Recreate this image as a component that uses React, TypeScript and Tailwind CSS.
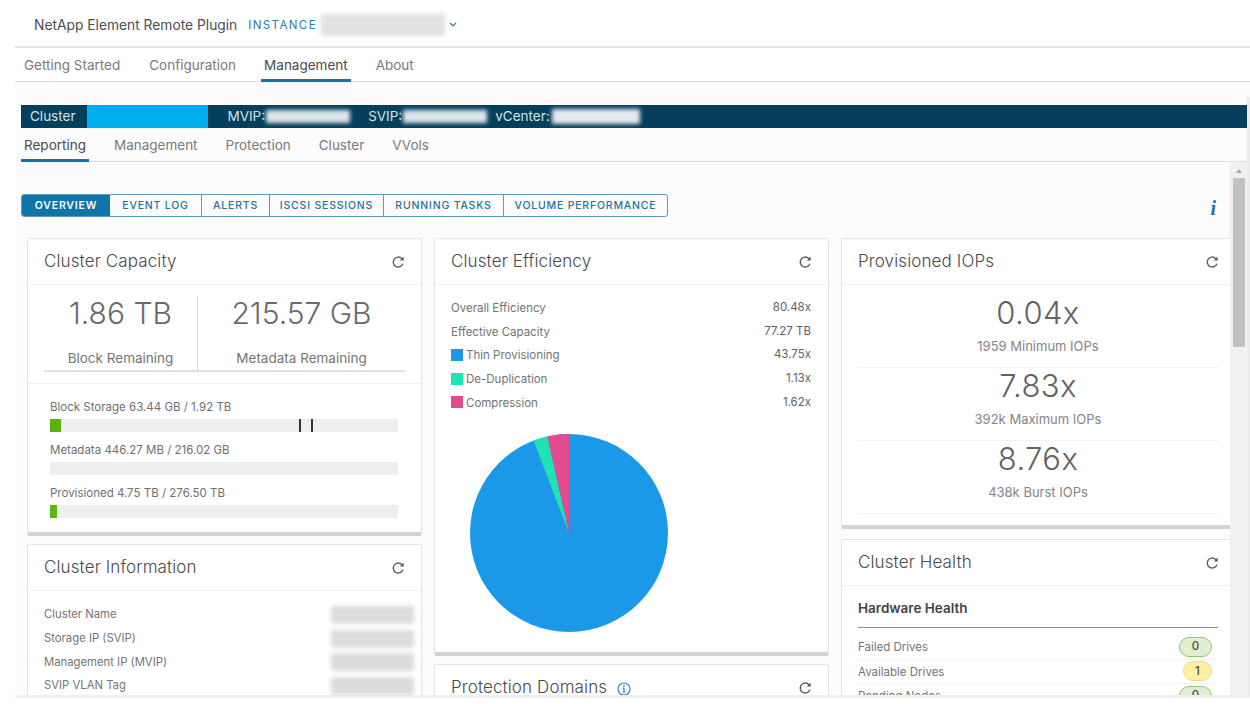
import React from "react";

const FONT = "[font-family:Inter,'Liberation_Sans',sans-serif]";

function Refresh() {
  return (
    <svg width="14" height="14" viewBox="0 0 14 14" fill="none" stroke="#5a5a5a" strokeWidth="1.35" className="shrink-0">
      <path d="M12 8.6A5 5 0 1 1 10.7 3.4L12 4.8" />
      <path d="M12.6 1.6V5.4H8.9" fill="#5a5a5a" stroke="none" />
    </svg>
  );
}

function Blur({ className }: { className: string }) {
  return <div className={`blur-[2px] ${className}`} />;
}

function Card({ title, extra, children, className = "" }: { title: string; extra?: React.ReactNode; children: React.ReactNode; className?: string }) {
  return (
    <section className={`bg-white border border-[#e4e4e4] border-b-[4px] border-b-[#d2d2d2] rounded-[3px] ${className}`}>
      <header className="h-[46px] flex items-center justify-between pl-[16px] pr-[16px] border-b border-[#f0f0f0]">
        <div className="flex items-center gap-[10px] text-[17px] text-[#4a4a4a] font-light tracking-[0.12px]">
          {title}
          {extra}
        </div>
        <Refresh />
      </header>
      {children}
    </section>
  );
}

function Bar({ label, fill }: { label: string; fill?: number }) {
  return (
    <div className="h-[43px]">
      <div className="text-[11.5px] leading-[16px] text-[#6f6f6f] h-[16px]">{label}</div>
      <div className="mt-[4px] h-[13px] bg-[#eeeeee] relative">
        {fill ? <div className="h-full bg-[#5cb30f]" style={{ width: fill }} /> : null}
      </div>
    </div>
  );
}

function Row({ label, value, swatch }: { label: string; value: string; swatch?: string }) {
  return (
    <div className="h-[23.6px] flex items-center justify-between text-[11.5px] text-[#737373]">
      <span className="flex items-center gap-[3px]">
        {swatch ? <span className="w-[12px] h-[12px] inline-block -mt-[2px]" style={{ background: swatch }} /> : null}
        {label}
      </span>
      <span className="-mt-[2px] text-[#5f5f5f]">{value}</span>
    </div>
  );
}

function Iops({ big, small }: { big: string; small: string }) {
  return (
    <div className="h-[73px] border-b border-[#f2f2f2] text-center">
      <div className="text-[31px] leading-[36px] font-light text-[#636363] tracking-[0.4px]">{big}</div>
      <div className="text-[13px] leading-[16px] mt-[7px] text-[#858585]">{small}</div>
    </div>
  );
}

function Pill({ v, yellow, narrow }: { v: string; yellow?: boolean; narrow?: boolean }) {
  return (
    <span
      className={`h-[20px] rounded-full border flex items-center justify-center text-[11.5px] font-medium text-[#4a4a4a] ${narrow ? "w-[29px]" : "w-[33px]"} ${
        yellow ? "bg-[#fdf0a4] border-[#f0dc84]" : "bg-[#dff0d0] border-[#92c47c]"
      }`}
    >
      {v}
    </span>
  );
}

function Health({ label, children }: { label: string; children: React.ReactNode }) {
  return (
    <div className="h-[24.5px] flex items-center justify-between border-b border-[#f3f3f3] text-[11.5px] text-[#757575] pr-[6px]">
      <span className="mt-[2px]">{label}</span>
      {children}
    </div>
  );
}

function InfoRow({ label }: { label: string }) {
  return (
    <div className="h-[23.7px] flex items-center justify-between text-[11.3px] text-[#757575] pl-[16px] pr-[7px]">
      <span>{label}</span>
      <Blur className="w-[83px] h-[18px] bg-[#dcdcdc] rounded-[2px]" />
    </div>
  );
}

const segs = ["OVERVIEW", "EVENT LOG", "ALERTS", "ISCSI SESSIONS", "RUNNING TASKS", "VOLUME PERFORMANCE"];
const segW = ["w-[88px]", "w-[91px]", "w-[68px]", "w-[114px]", "w-[120px]", "w-[164px]"];

export default function App() {
  return (
    <div className={`${FONT} relative w-[1250px] h-[704px] overflow-hidden bg-white pl-[15px] flex flex-col`}>
      {/* plugin header */}
      <div className="h-[48px] shrink-0 flex items-center border-b-2 border-[#e4e4e4] pl-[19px] pt-[4px]">
        <span className="text-[13.8px] text-[#4d4d4d]">NetApp Element Remote Plugin</span>
        <span className="ml-[11px] text-[11.5px] tracking-[1.4px] text-[#2f7aa6] mt-[2px]">INSTANCE</span>
        <Blur className="ml-[4px] w-[124px] h-[22px] bg-[#e2e2e2]" />
        <svg width="8" height="6" viewBox="0 0 8 6" className="ml-[4px]" fill="none" stroke="#2f7aa6" strokeWidth="1.2">
          <path d="M1 1l3 3 3-3" />
        </svg>
      </div>

      {/* primary tabs */}
      <div className="h-[34px] shrink-0 flex items-stretch gap-[28px] border-b border-[#dddddd] pl-[9px] text-[13.5px] text-[#7a7a7a]">
        <span className="flex items-center pt-[2px] mr-[1px]">Getting Started</span>
        <span className="flex items-center pt-[2px]">Configuration</span>
        <span className="flex items-center text-[#4a4a4a] border-b-[3px] border-[#0f74a8] px-[3px] -mx-[3px] -mb-px pt-[3px]">Management</span>
        <span className="flex items-center pt-[2px]">About</span>
      </div>

      <div className="flex-1 min-h-0 bg-[#fcfcfc] pl-[6px] pt-[23px] flex flex-col">
        {/* cluster bar */}
        <div className="h-[23px] mr-[3px] shrink-0 bg-[#043f5c] flex items-center pl-[9px] text-[13.5px] text-[#d5e2e8]">
          <span>Cluster</span>
          <div className="ml-[12px] w-[121px] h-[23px] bg-[#03aeef]" />
          <span className="ml-[19px]">MVIP:</span>
          <Blur className="ml-[1px] w-[84px] h-[13px] bg-[#dfe6ea]" />
          <span className="ml-[18px]">SVIP:</span>
          <Blur className="ml-[1px] w-[84px] h-[13px] bg-[#dfe6ea]" />
          <span className="ml-[8px]">vCenter:</span>
          <Blur className="ml-[2px] w-[88px] h-[15px] bg-[#e6eaec]" />
        </div>

        {/* secondary tabs */}
        <div className="h-[34px] shrink-0 flex items-stretch gap-[28px] border-b border-[#dddddd] pl-[3px] text-[13.5px] text-[#7a7a7a]">
          <span className="flex items-center text-[#4a4a4a] border-b-[3px] border-[#0f74a8] px-[3px] -ml-[3px] -mb-px pt-[3px] -mr-[3px]">Reporting</span>
          <span className="flex items-center pt-[2px]">Management</span>
          <span className="flex items-center pt-[2px]">Protection</span>
          <span className="flex items-center pt-[2px]">Cluster</span>
          <span className="flex items-center pt-[2px]">VVols</span>
        </div>

        {/* scrolling region */}
        <div className="flex-1 min-h-0 flex pr-[3px]">
          <div className="flex-1 min-w-0 overflow-hidden pt-[32px]">
            <div className="flex items-center h-[23px] pr-[14px]">
              <div className="flex h-[23px] rounded-[3px] border border-[#5f9bb8] overflow-hidden text-[10.5px] font-medium tracking-[0.8px] text-[#2a7199]">
                {segs.map((s, i) => (
                  <span
                    key={s}
                    className={`flex items-center justify-center ${segW[i]} ${i === 0 ? "bg-[#0f74a8] text-white font-semibold" : ""} ${i > 1 ? "border-l border-[#5f9bb8]" : ""}`}
                  >
                    {s}
                  </span>
                ))}
              </div>
              <span className="ml-auto text-[#0f74a8] text-[20px] font-bold italic [font-family:'Liberation_Serif',serif] leading-none mt-[4px]">i</span>
            </div>

            <div className="mt-[21px] pl-[6px] flex gap-[12px] w-[1240px]">
              {/* left column */}
              <div className="w-[395px] shrink-0 flex flex-col gap-[8px]">
                <Card title="Cluster Capacity" className="h-[298px]">
                  <div className="mx-[16px] mt-[11px] h-[76px] flex border-b-2 border-[#e2e2e2]">
                    <div className="w-[154px] border-r border-[#dcdcdc] text-center">
                      <div className="text-[30px] leading-[34px] font-light text-[#6a6a6a]">1.86 TB</div>
                      <div className="mt-[14px] text-[13.5px] leading-[18px] text-[#757575] pt-[5px]">Block Remaining</div>
                    </div>
                    <div className="flex-1 text-center">
                      <div className="text-[30px] leading-[34px] font-light text-[#6a6a6a]">215.57 GB</div>
                      <div className="mt-[14px] text-[13.5px] leading-[18px] text-[#757575] pt-[5px]">Metadata Remaining</div>
                    </div>
                  </div>
                  <div className="mt-[11px] border-t border-[#efefef] pt-[15px] pl-[22px] pr-[23px]">
                    <div className="relative">
                      <Bar label="Block Storage 63.44 GB / 1.92 TB" fill={11} />
                      <div className="absolute left-[249px] top-[20px] w-[2px] h-[13px] bg-[#333333]" />
                      <div className="absolute left-[261px] top-[20px] w-[2px] h-[13px] bg-[#333333]" />
                    </div>
                    <Bar label="Metadata 446.27 MB / 216.02 GB" />
                    <Bar label="Provisioned 4.75 TB / 276.50 TB" fill={7} />
                  </div>
                </Card>
                <Card title="Cluster Information" className="h-[200px]">
                  <div className="pt-[12px]">
                    <InfoRow label="Cluster Name" />
                    <InfoRow label="Storage IP (SVIP)" />
                    <InfoRow label="Management IP (MVIP)" />
                    <InfoRow label="SVIP VLAN Tag" />
                  </div>
                </Card>
              </div>

              {/* middle column */}
              <div className="w-[395px] shrink-0 flex flex-col gap-[8px]">
                <Card title="Cluster Efficiency" className="h-[418px]">
                  <div className="px-[16px] pt-[12px] pr-[17px]">
                    <Row label="Overall Efficiency" value="80.48x" />
                    <Row label="Effective Capacity" value="77.27 TB" />
                    <Row label="Thin Provisioning" value="43.75x" swatch="#1b98e8" />
                    <Row label="De-Duplication" value="1.13x" swatch="#1fe3b5" />
                    <Row label="Compression" value="1.62x" swatch="#e34b8e" />
                    <svg width="200" height="200" viewBox="0 0 200 200" className="mt-[18px] ml-[18px] block">
                      <circle cx="100" cy="100" r="99" fill="#1b98e8" />
                      <path d="M100 100L64.5 7.6A99 99 0 0 1 78.4 3.4Z" fill="#1fe3b5" />
                      <path d="M100 100L78.4 3.4A99 99 0 0 1 100 1Z" fill="#e34b8e" />
                    </svg>
                  </div>
                </Card>
                <Card title="Protection Domains" className="h-[100px]" extra={
                  <svg width="14" height="14" viewBox="0 0 14 14" fill="none" className="mt-[3px]">
                    <circle cx="7" cy="7" r="6" stroke="#2f86c5" strokeWidth="1.2" />
                    <path d="M7 6v4M5.8 10.2h2.4M5.9 6.2H7" stroke="#2f86c5" strokeWidth="1.2" />
                    <circle cx="7" cy="3.9" r="0.9" fill="#2f86c5" />
                  </svg>
                }>
                  <div />
                </Card>
              </div>

              {/* right column */}
              <div className="w-[395px] shrink-0 flex flex-col gap-[10px]">
                <Card title="Provisioned IOPs" className="h-[291px]">
                  <div className="pl-[16px] pr-[17px] pt-[10px]">
                    <Iops big="0.04x" small="1959 Minimum IOPs" />
                    <Iops big="7.83x" small="392k Maximum IOPs" />
                    <Iops big="8.76x" small="438k Burst IOPs" />
                  </div>
                </Card>
                <Card title="Cluster Health" className="h-[200px]">
                  <div className="pl-[16px] pr-[17px]">
                    <div className="h-[42px] flex items-center border-b border-[#8a8a8a] text-[13.5px] font-semibold text-[#444444] pt-[4px]">Hardware Health</div>
                    <div className="pt-[7px]">
                      <Health label="Failed Drives"><Pill v="0" /></Health>
                      <Health label="Available Drives"><Pill v="1" yellow narrow /></Health>
                      <Health label="Pending Nodes"><Pill v="0" /></Health>
                    </div>
                  </div>
                </Card>
              </div>
            </div>
          </div>

          {/* scrollbar */}
          <div className="w-[17px] shrink-0 bg-[#f1f1f1] flex flex-col items-center">
            <svg width="8" height="6" viewBox="0 0 8 6" className="mt-[6px]">
              <path d="M4 1l3 4H1z" fill="#a9a9a9" />
            </svg>
            <div className="mt-[4px] w-[12px] h-[169px] bg-[#c1c1c1]" />
          </div>
        </div>
      </div>

      {/* bottom strip */}
      <div className="h-[3px] mt-[-1px] shrink-0 bg-[#f0f0f0]" />
      <div className="h-[6px] shrink-0 bg-white" />

      {/* outer scrollbar sliver */}
      <div className="absolute right-0 top-[97px] bottom-[8px] w-[3px] bg-[#ececec]" />
    </div>
  );
}
